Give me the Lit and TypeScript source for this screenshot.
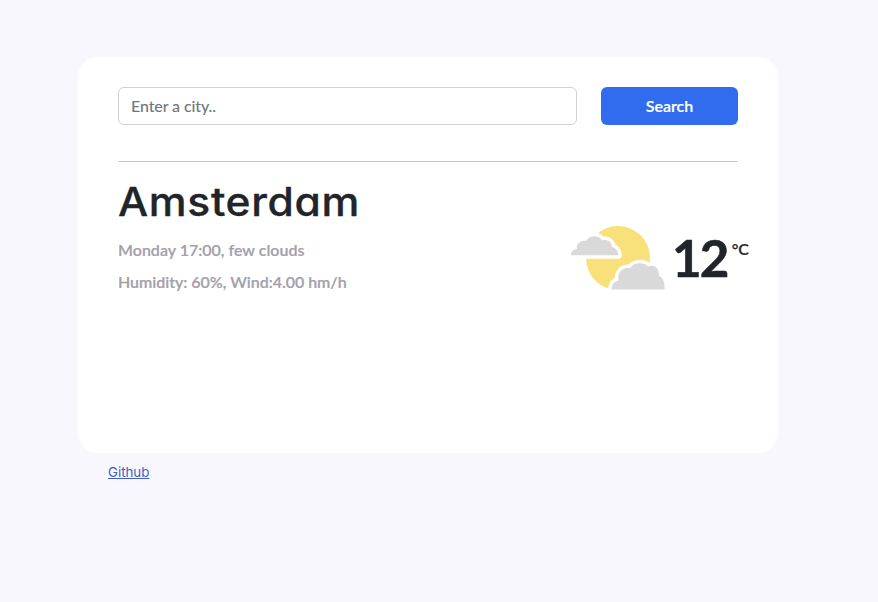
import { LitElement, html, css, svg } from "lit";
import { customElement, property } from "lit/decorators.js";

const LEFT_CLOUD =
  "M0 29.2C.2 25.500 2 23.500 6 23C5 18 9 14 15 15C17 10 27 7.500 31 14.500C37 13 41 16 41 21C45 22 47 25 47.300 29.200Z";
const RIGHT_CLOUD =
  "M40.300 63.500C41 58.500 43 55.500 47.500 54.500C46 47 51 41 59.500 42.300C61 37 72.500 35 77 40.500C83 38 88.500 42 88 50C92.500 52 93.700 57 93.700 63.500Z";

@customElement("weather-icon")
export class WeatherIcon extends LitElement {
  static styles = css`
    :host { display: block; width: 94px; height: 64px; }
    svg { display: block; overflow: visible; }
    .sun { fill: #f8e07b; }
    .gap { fill: #fff; stroke: #fff; stroke-width: 7; stroke-linejoin: round; }
    .cloud { fill: #d9d9d9; }
  `;
  render() {
    return html`<svg width="94" height="64" viewBox="0 0 94 64">
      <circle class="sun" cx="47" cy="32" r="32"></circle>
      ${[LEFT_CLOUD, RIGHT_CLOUD].map(
        (d) => svg`<path class="gap" d=${d}></path><path class="cloud" d=${d}></path>`
      )}
    </svg>`;
  }
}

@customElement("search-bar")
export class SearchBar extends LitElement {
  static styles = css`
    :host { display: block; }
    form { display: flex; gap: 24px; margin: 0; }
    input, button {
      box-sizing: border-box; height: 38px; border-radius: 6px; margin: 0;
      font: 500 16px/24px Lato, sans-serif;
    }
    input {
      flex: 1; min-width: 0; padding: 5px 12px 7px; border: 1px solid #ced0d3;
      background: #fff; color: #212529; outline: none; letter-spacing: -0.1px;
    }
    input::placeholder { color: #70767c; opacity: 1; }
    button {
      width: 137px; border: 0; background: #316cee; color: #fff; font-weight: 600;
      -webkit-text-stroke: 0.2px #fff;
    }
  `;
  render() {
    return html`<form @submit=${(e: Event) => e.preventDefault()}>
      <input type="text" placeholder="Enter a city.." />
      <button type="submit">Search</button>
    </form>`;
  }
}

@customElement("app-root")
export class AppRoot extends LitElement {
  @property() city = "Amsterdam";
  @property({ type: Number }) temperature = 12;

  static styles = css`
    :host {
      display: block; box-sizing: border-box; min-height: 602px;
      padding: 57px 100px 0 78px; background: #f7f7fd;
      font-family: Lato, sans-serif; color: #212529;
    }
    .card {
      box-sizing: border-box; height: 396px; padding: 30px 40px;
      border-radius: 20px; background: #fff;
    }
    .rule { height: 1px; margin: 36px 0 18px; background: #c6c8ca; }
    .weather { display: flex; justify-content: space-between; }
    h1 {
      margin: 0 0 10px; font: 500 39.5px/44px Inter, sans-serif;
      font-feature-settings: "cv11"; letter-spacing: 0.6px;
      transform: scaleX(1.078); transform-origin: 0 0;
      -webkit-text-stroke: 0.3px #212529;
    }
    p {
      margin: 0; font-size: 16px; line-height: 32px; font-weight: 600; color: #a3a0ab;
      -webkit-text-stroke: 0.2px #a3a0ab;
    }
    p + p { letter-spacing: -0.03px; }
    .now { display: flex; margin: 46px -11px 0 0; }
    .temp {
      margin-left: 7px; font-size: 51px; line-height: 64px; font-weight: 700;
      letter-spacing: -2px; -webkit-text-stroke: 0.6px #212529;
    }
    .unit {
      margin: 11px 0 0 4.5px; font-size: 16px; line-height: 24px; font-weight: 600;
      -webkit-text-stroke: 0.2px #212529;
    }
    .source {
      display: inline-block; margin: 9px 0 0 30px; color: #3f5fc8;
      font: 13.3px/20px Inter, sans-serif;
    }
  `;
  render() {
    return html`
      <main class="card">
        <search-bar></search-bar>
        <div class="rule"></div>
        <section class="weather">
          <div>
            <h1>${this.city}</h1>
            <p>Monday 17:00, few clouds</p>
            <p>Humidity: 60%, Wind:4.00 hm/h</p>
          </div>
          <div class="now">
            <weather-icon></weather-icon>
            <span class="temp">${this.temperature}</span>
            <span class="unit">°C</span>
          </div>
        </section>
      </main>
      <a class="source" href="#">Github</a>
    `;
  }
}
